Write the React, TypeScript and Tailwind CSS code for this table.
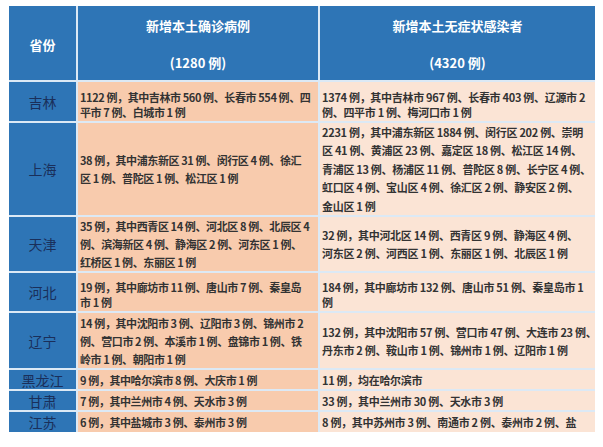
type Row = {
  name: string;
  h: string;
  lead: string;
  pad?: string;
  a: string[];
  b: string[];
};

const rows: Row[] = [
  {
    name: '吉林',
    h: 'h-[39px]',
    lead: 'leading-[15px]',
    pad: 'pt-[6px]',
    a: ['1122 例，其中吉林市 560 例、长春市 554 例、四', '平市 7 例、白城市 1 例'],
    b: ['1374 例，其中吉林市 967 例、长春市 403 例、辽源市 2', '例、四平市 1 例、梅河口市 1 例'],
  },
  {
    name: '上海',
    h: 'h-[92px]',
    lead: 'leading-[18.5px]',
    a: ['38 例，其中浦东新区 31 例、闵行区 4 例、徐汇', '区 1 例、普陀区 1 例、松江区 1 例'],
    b: [
      '2231 例，其中浦东新区 1884 例、闵行区 202 例、崇明',
      '区 41 例、黄浦区 23 例、嘉定区 18 例、松江区 14 例、',
      '青浦区 13 例、杨浦区 11 例、普陀区 8 例、长宁区 4 例、',
      '虹口区 4 例、宝山区 4 例、徐汇区 2 例、静安区 2 例、',
      '金山区 1 例',
    ],
  },
  {
    name: '天津',
    h: 'h-[54px]',
    lead: 'leading-[18px]',
    a: ['35 例，其中西青区 14 例、河北区 8 例、北辰区 4', '例、滨海新区 4 例、静海区 2 例、河东区 1 例、', '红桥区 1 例、东丽区 1 例'],
    b: ['32 例，其中河北区 14 例、西青区 9 例、静海区 4 例、', '河东区 2 例、河西区 1 例、东丽区 1 例、北辰区 1 例'],
  },
  {
    name: '河北',
    h: 'h-[38px]',
    lead: 'leading-[15px]',
    pad: 'pt-[6px]',
    a: ['19 例，其中廊坊市 11 例、唐山市 7 例、秦皇岛', '市 1 例'],
    b: ['184 例，其中廊坊市 132 例、唐山市 51 例、秦皇岛市 1', '例'],
  },
  {
    name: '辽宁',
    h: 'h-[55px]',
    lead: 'leading-[18px]',
    a: ['14 例，其中沈阳市 3 例、辽阳市 3 例、锦州市 2', '例、营口市 2 例、本溪市 1 例、盘锦市 1 例、铁', '岭市 1 例、朝阳市 1 例'],
    b: ['132 例，其中沈阳市 57 例、营口市 47 例、大连市 23 例、', '丹东市 2 例、鞍山市 1 例、锦州市 1 例、辽阳市 1 例'],
  },
  {
    name: '黑龙江',
    h: 'h-[19px]',
    lead: 'leading-[18px]',
    a: ['9 例，其中哈尔滨市 8 例、大庆市 1 例'],
    b: ['11 例，均在哈尔滨市'],
  },
  {
    name: '甘肃',
    h: 'h-[19px]',
    lead: 'leading-[18px]',
    a: ['7 例，其中兰州市 4 例、天水市 3 例'],
    b: ['33 例，其中兰州市 30 例、天水市 3 例'],
  },
  {
    name: '江苏',
    h: 'h-[20px]',
    lead: 'leading-[18px]',
    a: ['6 例，其中盐城市 3 例、泰州市 3 例'],
    b: ['8 例，其中苏州市 3 例、南通市 2 例、泰州市 2 例、盐'],
  },
];

function Lines({ lines, lead, pad }: { lines: string[]; lead: string; pad?: string }) {
  return (
    <div className={`flex flex-col ${pad ?? ''}`}>
      {lines.map((l, i) => (
        <div key={i} className={`whitespace-nowrap ${lead}`}>
          {l}
        </div>
      ))}
    </div>
  );
}

export default function App() {
  return (
    <div className="min-h-[447px] w-[603px] bg-white pt-[6px] pl-[9px] font-['Noto_Sans_CJK_SC',sans-serif]">
      <div className="grid w-[586px] grid-cols-[67px_240px_275px] gap-[2px] bg-[#dce9f5]">
        <div className="flex h-[74px] items-center justify-center bg-[#2e75b6] pt-[4px] text-[13px] font-bold text-white">
          省份
        </div>
        <div className="flex h-[74px] flex-col items-center justify-center gap-[19px] bg-[#2e75b6] pt-[3px] text-[13px] font-bold leading-[18px] text-white">
          <div>新增本土确诊病例</div>
          <div>(1280 例)</div>
        </div>
        <div className="flex h-[74px] flex-col items-center justify-center gap-[19px] bg-[#2e75b6] pt-[3px] text-[13px] font-bold leading-[18px] text-white">
          <div>新增本土无症状感染者</div>
          <div>(4320 例)</div>
        </div>

        {rows.map((r) => (
          <div key={r.name} className="contents">
            <div className={`flex ${r.h} items-center justify-center bg-[#2e75b6] text-[14px] leading-none text-[#1a2f5a]`}>
              {r.name}
            </div>
            <div className={`flex ${r.h} items-center overflow-hidden bg-[#f8cbad] pl-[2px] text-[11px] font-bold tracking-[-0.4px] text-[#333333]`}>
              <Lines lines={r.a} lead={r.lead} pad={r.pad} />
            </div>
            <div className={`flex ${r.h} items-center overflow-hidden bg-[#fbe4d5] pl-[2px] text-[11px] font-bold tracking-[-0.3px] text-[#333333]`}>
              <Lines lines={r.b} lead={r.lead} pad={r.pad} />
            </div>
          </div>
        ))}
      </div>
    </div>
  );
}
